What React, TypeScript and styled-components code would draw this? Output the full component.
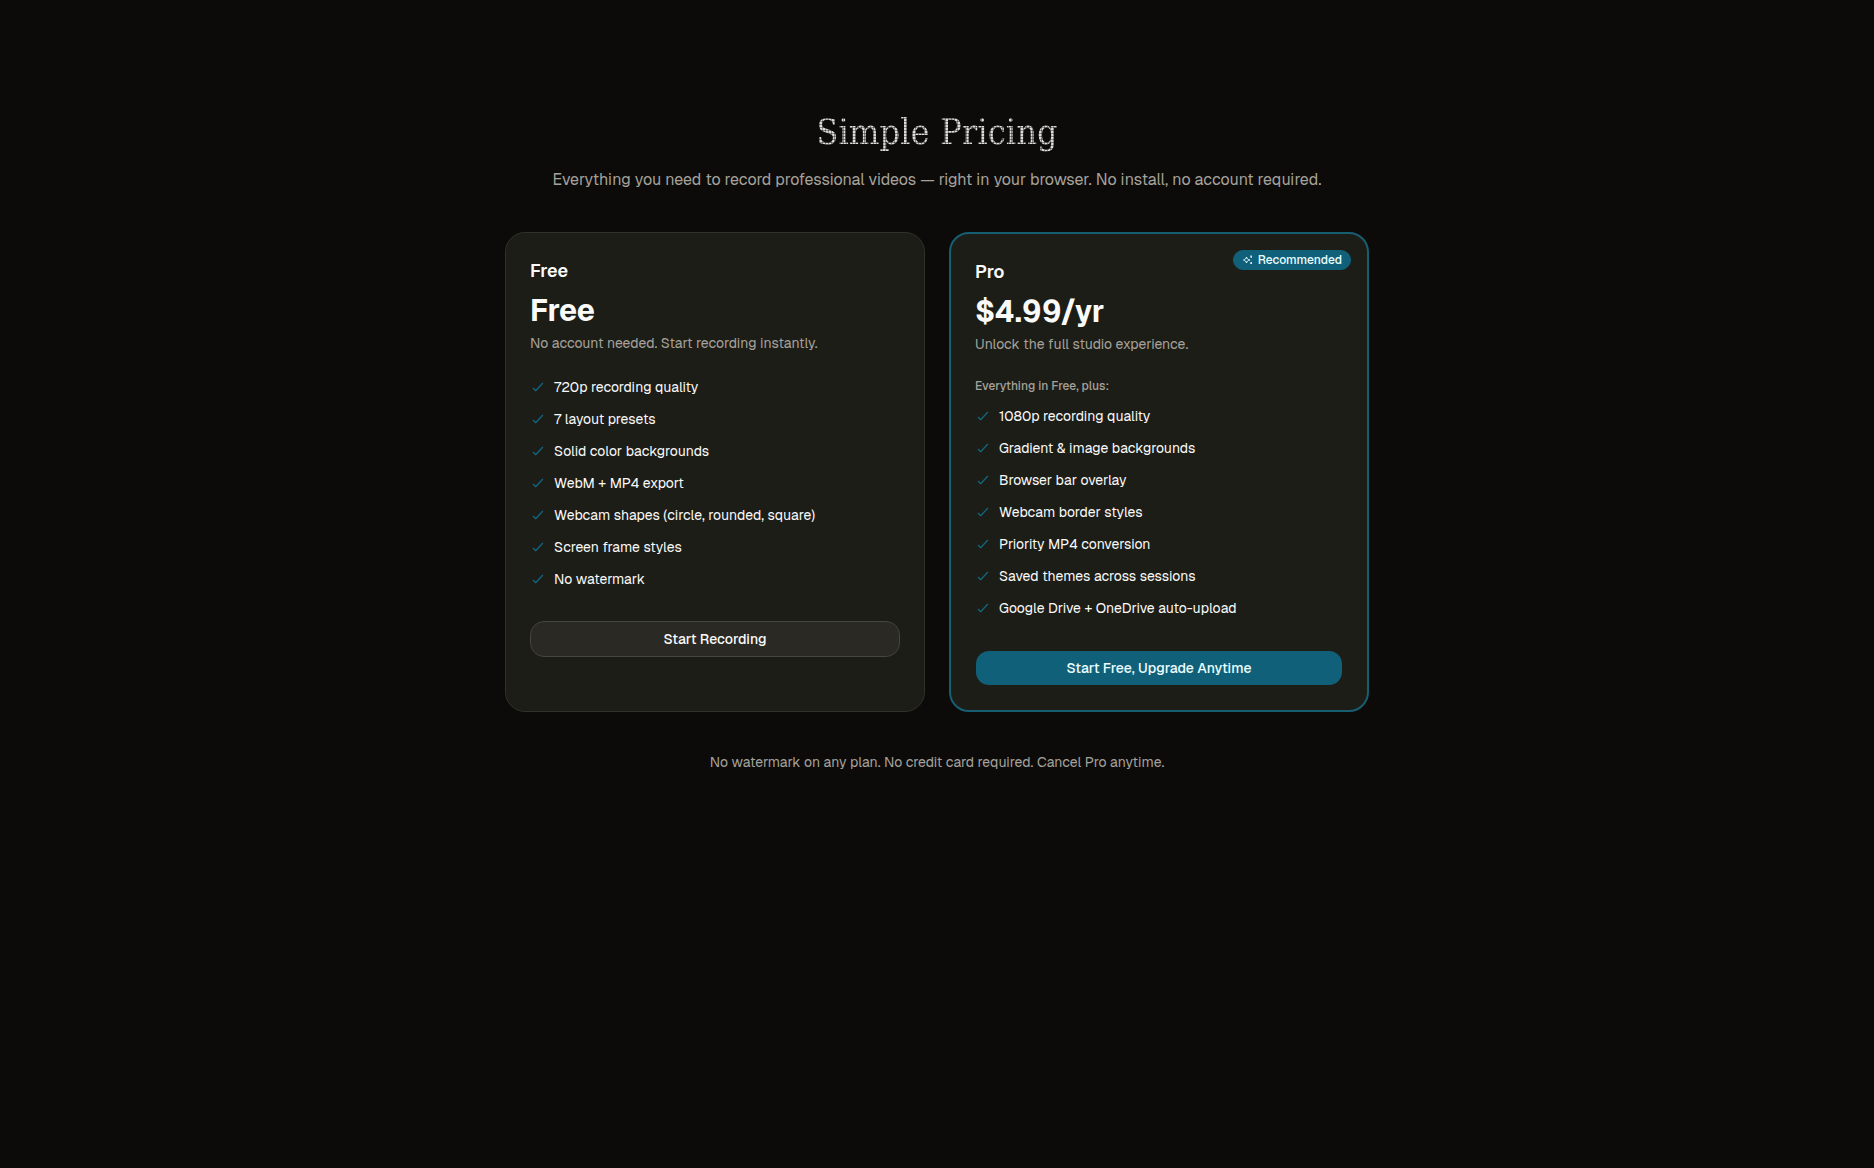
import React from "react";
import styled, { createGlobalStyle, css } from "styled-components";

const GlobalStyle = createGlobalStyle`
  *, *::before, *::after { box-sizing: border-box; }
  body {
    margin: 0;
    background: #0c0b09;
    color: #fafaf9;
    font-family: Geist, Inter, "Liberation Sans", sans-serif;
    font-size: 14px;
    line-height: 20px;
    -webkit-font-smoothing: antialiased;
  }
  h1, h2, p, ul { margin: 0; padding: 0; }
`;

const Page = styled.main`
  max-width: 896px;
  margin: 0 auto;
  padding: 112px 16px 96px;
`;

const Header = styled.header`
  display: flex;
  flex-direction: column;
  align-items: center;
  gap: 16px;
  margin-bottom: 40px;
  text-align: center;
`;

const Heading = styled.h1`
  font-family: "Geist Pixel Circle", "Geist Pixel", "DejaVu Serif Condensed", "DejaVu Serif", serif;
  font-size: 36px;
  line-height: 40px;
  font-weight: 400;
  color: transparent;
  background-image:
    linear-gradient(to right, rgba(12, 11, 9, 0.4) 1px, transparent 1px),
    linear-gradient(to bottom, rgba(12, 11, 9, 0.4) 1px, transparent 1px);
  background-color: #dcdcda;
  background-size: 3px 3px;
  background-clip: text;
  -webkit-background-clip: text;
`;

const Lead = styled.p`
  font-size: 16px;
  line-height: 24px;
  color: #a6a29b;
`;

const Plans = styled.div`
  display: grid;
  grid-template-columns: repeat(2, minmax(0, 1fr));
  gap: 24px;

  @media (max-width: 767px) {
    grid-template-columns: minmax(0, 1fr);
  }
`;

const Card = styled.section<{ $featured?: boolean }>`
  position: relative;
  padding: 24px;
  border-radius: 20px;
  background: #1d1d18;
  border: ${(p) => (p.$featured ? "2px solid #175e72" : "1px solid #31312b")};
`;

const Badge = styled.span`
  position: absolute;
  top: 16px;
  right: 16px;
  display: inline-flex;
  align-items: center;
  gap: 4px;
  height: 20px;
  padding: 0 8px;
  border: 1px solid #11607a;
  border-radius: 10px;
  background: #11607a;
  color: #ecfeff;
  font-size: 12px;
  line-height: 16px;
  font-weight: 500;
`;

const PlanName = styled.h2`
  margin-bottom: 8px;
  font-size: 18px;
  line-height: 28px;
  font-weight: 600;
`;

const Price = styled.p`
  margin-bottom: 4px;
  font-size: 30px;
  line-height: 36px;
  font-weight: 700;
`;

const Summary = styled.p`
  margin-bottom: 24px;
  color: #a6a29b;
`;

const Includes = styled.p`
  margin-bottom: 12px;
  font-size: 12px;
  line-height: 16px;
  font-weight: 500;
  color: #a6a29b;
`;

const Features = styled.ul`
  display: flex;
  flex-direction: column;
  gap: 12px;
  margin-bottom: 32px;
  list-style: none;
`;

const Feature = styled.li`
  display: flex;
  align-items: center;
  gap: 8px;
`;

const Action = styled.button<{ $primary?: boolean }>`
  display: block;
  width: 100%;
  height: 36px;
  padding: 0 12px;
  border: 1px solid transparent;
  border-radius: 14px;
  background-clip: padding-box;
  font: inherit;
  font-weight: 500;
  cursor: pointer;
  ${(p) =>
    p.$primary
      ? css`
          background-color: #11607a;
          color: #ecfeff;
        `
      : css`
          background-color: #2a2924;
          border-color: #464641;
          color: #fafaf9;
        `}
`;

const Footnote = styled.p`
  margin-top: 40px;
  text-align: center;
  color: #a6a29b;
`;

const Icon = styled.svg`
  flex: none;
  fill: none;
  stroke: currentColor;
  stroke-width: 2;
  stroke-linecap: round;
  stroke-linejoin: round;
`;

const TickIcon = styled(Icon)`
  color: #11667f;
`;

function Tick() {
  return (
    <TickIcon width="16" height="16" viewBox="0 0 24 24" aria-hidden="true">
      <path d="M5 14L8.5 17.5L19 6.5" />
    </TickIcon>
  );
}

function Sparkles() {
  return (
    <Icon width="12" height="12" viewBox="0 0 24 24" aria-hidden="true">
      <path d="M15 12C12 12.5 9.5 15 9 18C8.5 15 6 12.5 3 12C6 11.5 8.5 9 9 6C9.5 9 12 11.5 15 12Z" />
      <path d="M18.5 4L19 5L20 5.5L19 6L18.5 7L18 6L17 5.5L18 5Z" />
      <path d="M18.5 17L19 18L20 18.5L19 19L18.5 20L18 19L17 18.5L18 18Z" />
    </Icon>
  );
}

interface Plan {
  name: string;
  price: string;
  summary: string;
  includes?: string;
  features: string[];
  action: string;
  featured?: boolean;
}

const plans: Plan[] = [
  {
    name: "Free",
    price: "Free",
    summary: "No account needed. Start recording instantly.",
    features: [
      "720p recording quality",
      "7 layout presets",
      "Solid color backgrounds",
      "WebM + MP4 export",
      "Webcam shapes (circle, rounded, square)",
      "Screen frame styles",
      "No watermark",
    ],
    action: "Start Recording",
  },
  {
    name: "Pro",
    price: "$4.99/yr",
    summary: "Unlock the full studio experience.",
    includes: "Everything in Free, plus:",
    features: [
      "1080p recording quality",
      "Gradient & image backgrounds",
      "Browser bar overlay",
      "Webcam border styles",
      "Priority MP4 conversion",
      "Saved themes across sessions",
      "Google Drive + OneDrive auto-upload",
    ],
    action: "Start Free, Upgrade Anytime",
    featured: true,
  },
];

function PlanCard({ plan }: { plan: Plan }) {
  return (
    <Card $featured={plan.featured}>
      {plan.featured && (
        <Badge>
          <Sparkles />
          Recommended
        </Badge>
      )}
      <PlanName>{plan.name}</PlanName>
      <Price>{plan.price}</Price>
      <Summary>{plan.summary}</Summary>
      {plan.includes && <Includes>{plan.includes}</Includes>}
      <Features>
        {plan.features.map((feature) => (
          <Feature key={feature}>
            <Tick />
            {feature}
          </Feature>
        ))}
      </Features>
      <Action type="button" $primary={plan.featured}>
        {plan.action}
      </Action>
    </Card>
  );
}

export default function App() {
  return (
    <>
      <GlobalStyle />
      <Page>
        <Header>
          <Heading>Simple Pricing</Heading>
          <Lead>
            Everything you need to record professional videos — right in your browser. No install, no account
            required.
          </Lead>
        </Header>
        <Plans>
          {plans.map((plan) => (
            <PlanCard key={plan.name} plan={plan} />
          ))}
        </Plans>
        <Footnote>No watermark on any plan. No credit card required. Cancel Pro anytime.</Footnote>
      </Page>
    </>
  );
}
